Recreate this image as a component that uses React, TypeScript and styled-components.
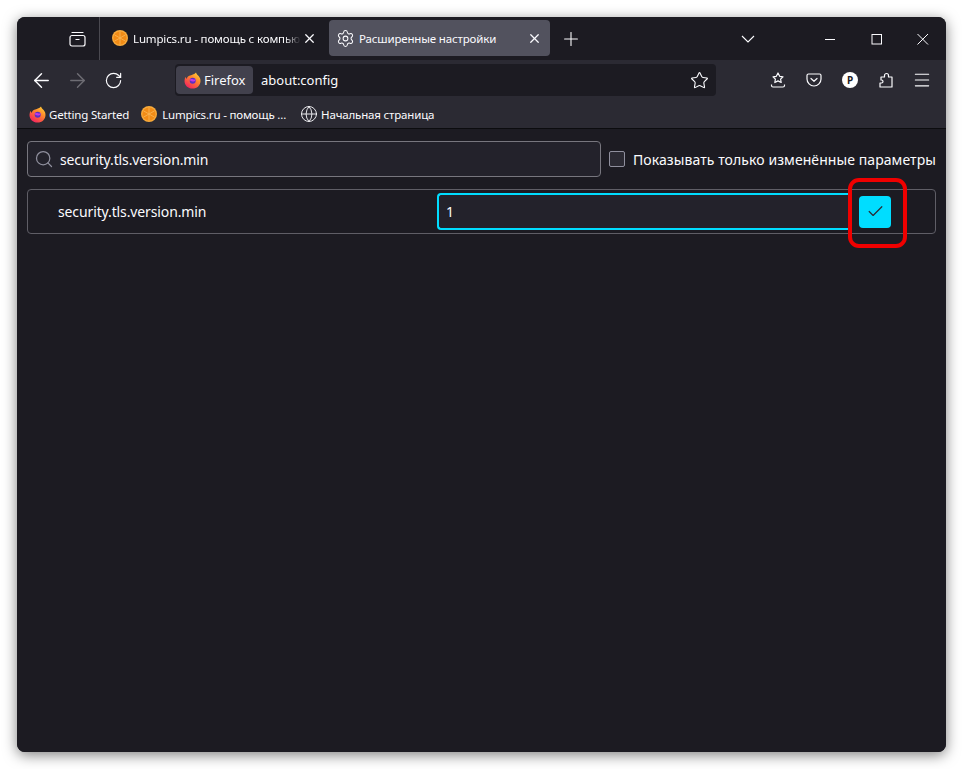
import styled, { createGlobalStyle } from 'styled-components';
import { ArrowLeft, ArrowRight, Check, Globe, Menu, Plus, RotateCw, Search, Settings, Star, X } from 'lucide-react';

const GlobalStyle = createGlobalStyle`
    html, body {
        margin: 0;
        padding: 0;
        background: #fff;
    }
    * {
        box-sizing: border-box;
    }
    svg {
        flex-shrink: 0;
    }
`

const Page = styled('div')`
    width: 963px;
    height: 769px;
    padding: 17px;
    font-family: "Noto Sans", "Open Sans", sans-serif;
    overflow: hidden;
`

const Window = styled('div')`
    position: relative;
    width: 929px;
    height: 735px;
    border-radius: 8px;
    background: #1c1b22;
    box-shadow: 0 3px 14px rgba(0, 0, 0, 0.5);
    overflow: hidden;
    display: flex;
    flex-direction: column;
    color: #fbfbfe;
`

const TitleBar = styled('div')`
    height: 43px;
    flex-shrink: 0;
    display: flex;
    align-items: flex-start;
    background: #1c1b22;
`

const TabListButton = styled('div')`
    width: 83px;
    height: 43px;
    padding-left: 52px;
    padding-top: 13px;
    border-right: 1px solid #4a4950;
    flex-shrink: 0;
`

const Tab = styled('div')<{ $active?: boolean; $gap?: number }>`
    width: 221px;
    height: 36px;
    margin-top: 3px;
    margin-left: ${props => props.$gap ?? 0}px;
    display: flex;
    align-items: center;
    padding-left: ${props => props.$active ? 8 : 12}px;
    border-radius: 4px;
    background: ${props => props.$active ? '#52525e' : 'transparent'};
    flex-shrink: 0;
`

const TabTitle = styled('span')<{ $fade?: boolean; $width: number }>`
    width: ${props => props.$width}px;
    margin-left: ${props => props.$fade ? 5 : 6}px;
    font-size: 11.5px;
    letter-spacing: -0.15px;
    white-space: nowrap;
    overflow: hidden;
    color: #fbfbfe;
    ${props => props.$fade ? `
        -webkit-mask-image: linear-gradient(to right, #000 90%, transparent);
        mask-image: linear-gradient(to right, #000 90%, transparent);
    ` : ''}
`

const TabClose = styled('div')`
    width: 16px;
    height: 16px;
    display: flex;
    align-items: center;
    justify-content: center;
    flex-shrink: 0;
`

const GearSlot = styled('div')`
    width: 16px;
    height: 16px;
    display: flex;
    align-items: center;
    justify-content: center;
    flex-shrink: 0;
`

const NewTab = styled('div')`
    width: 22px;
    height: 22px;
    margin-left: 10px;
    margin-top: 11px;
    flex-shrink: 0;
`

const TitleSpacer = styled('div')`
    flex: 1;
`

const CaptionButton = styled('div')<{ $gap: number }>`
    width: 16px;
    height: 16px;
    margin-top: 13px;
    margin-right: ${props => props.$gap}px;
    flex-shrink: 0;
`

const NavBar = styled('div')`
    height: 40px;
    flex-shrink: 0;
    display: flex;
    align-items: center;
    background: #2b2a33;
    padding-left: 16px;
`

const NavIcon = styled('div')<{ $gap?: number }>`
    width: 16px;
    height: 16px;
    margin-right: ${props => props.$gap ?? 20}px;
    flex-shrink: 0;
    display: flex;
    align-items: center;
    justify-content: center;
`

const UrlBar = styled('div')`
    width: 541px;
    height: 32px;
    margin-left: 54px;
    margin-right: 54px;
    padding: 2px 7px 2px 1px;
    border-radius: 4px;
    background: #1c1b22;
    display: flex;
    align-items: center;
    flex-shrink: 0;
`

const IdentityPill = styled('div')`
    width: 77px;
    height: 28px;
    border-radius: 4px;
    background: #42414d;
    display: flex;
    align-items: center;
    gap: 3px;
    padding-left: 8px;
    font-size: 13px;
    color: #fbfbfe;
    flex-shrink: 0;
`

const UrlText = styled('span')`
    flex: 1;
    margin-left: 8px;
    font-size: 13px;
    color: #fbfbfe;
`

const BookmarksBar = styled('div')`
    height: 29px;
    flex-shrink: 0;
    display: flex;
    align-items: center;
    background: #2b2a33;
    border-bottom: 1px solid #0c0c0f;
    padding-left: 12px;
`

const Bookmark = styled('div')<{ $gap: number; $textGap: number }>`
    display: flex;
    align-items: center;
    gap: ${props => props.$textGap}px;
    margin-right: ${props => props.$gap}px;
    font-size: 11.5px;
    letter-spacing: -0.17px;
    color: #fbfbfe;
    white-space: nowrap;
`

const GlobeSlot = styled('div')`
    width: 16px;
    height: 16px;
    display: flex;
    align-items: center;
    justify-content: center;
`

const Content = styled('div')`
    flex: 1;
    padding: 12px 10px 0 10px;
    background: #1c1b22;
`

const Toolbar = styled('div')`
    display: flex;
    align-items: center;
`

const SearchBox = styled('div')`
    width: 574px;
    height: 36px;
    display: flex;
    align-items: center;
    gap: 6px;
    padding-left: 6px;
    border: 1px solid #77767e;
    border-radius: 4px;
    background: #23222b;
    font-size: 14px;
    letter-spacing: -0.12px;
    color: #fbfbfe;
`

const CheckBox = styled('div')`
    width: 16px;
    height: 16px;
    margin-left: 8px;
    border: 1px solid #8f8f9d;
    border-radius: 2px;
    background: #2b2a33;
    flex-shrink: 0;
`

const CheckLabel = styled('span')`
    margin-left: 8px;
    font-size: 14px;
    letter-spacing: 0.08px;
    color: #fbfbfe;
    white-space: nowrap;
`

const PrefRow = styled('div')`
    width: 909px;
    height: 45px;
    margin-top: 12px;
    display: flex;
    align-items: center;
    padding-left: 30px;
    border: 1px solid #5f5e66;
    border-radius: 4px;
    font-size: 14px;
`

const PrefName = styled('span')`
    width: 379px;
    flex-shrink: 0;
    letter-spacing: -0.12px;
    color: #fbfbfe;
`

const PrefInput = styled('div')`
    width: 412px;
    height: 37px;
    display: flex;
    align-items: center;
    padding-left: 7px;
    border: 2px solid #00ddff;
    border-right: none;
    border-radius: 4px 0 0 4px;
    background: #23222b;
    color: #fbfbfe;
    flex-shrink: 0;
`

const SaveButton = styled('div')`
    width: 32px;
    height: 32px;
    margin-left: 10px;
    border-radius: 4px;
    background: #00ddff;
    display: flex;
    align-items: center;
    justify-content: center;
    flex-shrink: 0;
`

const Highlight = styled('div')`
    position: absolute;
    left: 831px;
    top: 161px;
    width: 59px;
    height: 70px;
    border: 4px solid #f00000;
    border-radius: 11px;
    pointer-events: none;
`

const ProfileBadge = styled('div')`
    width: 16px;
    height: 16px;
    border-radius: 50%;
    background: #fff;
    color: #1c1b22;
    font-size: 10px;
    font-weight: 700;
    line-height: 16px;
    text-align: center;
`

const Orange = () => (
    <svg width="16" height="16" viewBox="0 0 16 16">
        <circle cx="8" cy="8" r="8" fill="#f8ab3c" />
        <circle cx="8" cy="8" r="6.600" fill="#f28c16" />
        <path d="M8 1.500v13M2.400 4.800l11.200 6.400M13.600 4.800L2.400 11.200" stroke="#f9b95a" strokeWidth="0.800" />
    </svg>
)

const FirefoxLogo = ({ id }: { id: string }) => (
    <svg width="17" height="17" viewBox="0 0 17 17">
        <defs>
            <linearGradient id={`${id}a`} x1="0.85" y1="0" x2="0.2" y2="0.95">
                <stop offset="0" stopColor="#ffd53a" />
                <stop offset="0.4" stopColor="#ff8a2b" />
                <stop offset="1" stopColor="#f3215f" />
            </linearGradient>
        </defs>
        <path d="M12 0.400c.4 1.600 1.600 2.400 2.600 3.600 1.300 1.500 1.900 3.100 1.900 4.900 0 4.400-3.500 7.700-8 7.700S.5 13.300.5 9c0-1.500.4-3 1.200-4.200.1 1 .5 1.700 1 2.200.2-1.500 1.200-2.500 2.600-3.200C7.500 2.800 10.500 2.500 12 .4z" fill={`url(#${id}a)`} />
        <circle cx="8.700" cy="8.800" r="3" fill="#5b2fc4" />
        <path d="M5.300 7.600c1.100-.6 2.300-.7 3.700-.3 1.300.4 2.200.2 2.900-.4-.2 1.600-1.500 2.600-3.200 2.600-1.400 0-2.600-.7-3.400-1.900z" fill="#c139e6" />
    </svg>
)

const App = () => {
    return (
        <Page>
            <GlobalStyle />
            <Window>
                <TitleBar>
                    <TabListButton>
                        <svg width="17" height="17" viewBox="0 0 17 17" fill="none" stroke="#fbfbfe" strokeWidth="1.200">
                            <path d="M3 2.500h11" strokeLinecap="round" />
                            <rect x="1" y="5.500" width="15" height="10.500" rx="2" />
                            <path d="M6.500 9.500h4" />
                        </svg>
                    </TabListButton>
                    <Tab>
                        <Orange />
                        <TabTitle $fade $width={168}>Lumpics.ru - помощь с компьютером</TabTitle>
                        <TabClose>
                            <X size={15} color="#fbfbfe" strokeWidth={2} />
                        </TabClose>
                    </Tab>
                    <Tab $active $gap={8}>
                        <GearSlot>
                            <Settings size={19} color="#fbfbfe" strokeWidth={1.300} />
                        </GearSlot>
                        <TabTitle $width={167}>Расширенные настройки</TabTitle>
                        <TabClose>
                            <X size={15} color="#fbfbfe" strokeWidth={2} />
                        </TabClose>
                    </Tab>
                    <NewTab>
                        <Plus size={22} color="#fbfbfe" strokeWidth={1.200} />
                    </NewTab>
                    <TitleSpacer />
                    <CaptionButton $gap={66}>
                        <svg width="16" height="16" viewBox="0 0 16 16" fill="none" stroke="#fbfbfe" strokeWidth="1.100">
                            <path d="M2 5l6 6 6-6" />
                        </svg>
                    </CaptionButton>
                    <CaptionButton $gap={31}>
                        <svg width="16" height="16" viewBox="0 0 16 16" fill="none" stroke="#fbfbfe">
                            <path d="M3 8.500h10" />
                        </svg>
                    </CaptionButton>
                    <CaptionButton $gap={30}>
                        <svg width="16" height="16" viewBox="0 0 16 16" fill="none" stroke="#fbfbfe">
                            <rect x="3" y="3.500" width="9.500" height="9.500" />
                        </svg>
                    </CaptionButton>
                    <CaptionButton $gap={15}>
                        <svg width="16" height="16" viewBox="0 0 16 16" fill="none" stroke="#fbfbfe">
                            <path d="M2.500 3l10.500 10.500M13 3L2.500 13.500" />
                        </svg>
                    </CaptionButton>
                </TitleBar>
                <NavBar>
                    <NavIcon>
                        <ArrowLeft size={23} color="#fbfbfe" strokeWidth={1.500} />
                    </NavIcon>
                    <NavIcon>
                        <ArrowRight size={23} color="#6e6d74" strokeWidth={1.500} />
                    </NavIcon>
                    <NavIcon $gap={0}>
                        <RotateCw size={19} color="#fbfbfe" strokeWidth={1.500} />
                    </NavIcon>
                    <UrlBar>
                        <IdentityPill>
                            <FirefoxLogo id="url" />
                            Firefox
                        </IdentityPill>
                        <UrlText>about:config</UrlText>
                        <Star size={19} color="#fbfbfe" strokeWidth={1.400} />
                    </UrlBar>
                    <NavIcon>
                        <svg width="16" height="16" viewBox="0 0 16 16" fill="none" stroke="#fbfbfe" strokeWidth="1.200" strokeLinejoin="round">
                            <path d="M8 1l1.700 3.300 3.300.5-2.400 2.300.6 3.400L8 8.900 4.800 10.500l.6-3.400L3 4.800l3.300-.5z" />
                            <path d="M1.500 12.500v1a1.500 1.500 0 0 0 1.500 1.500h10a1.500 1.500 0 0 0 1.500-1.500v-1" />
                        </svg>
                    </NavIcon>
                    <NavIcon>
                        <svg width="16" height="16" viewBox="0 0 16 16" fill="none" stroke="#fbfbfe" strokeWidth="1.200" strokeLinejoin="round" strokeLinecap="round">
                            <path d="M2.500 2h11A1.500 1.500 0 0 1 15 3.500V7a7 7 0 0 1-14 0V3.500A1.500 1.500 0 0 1 2.500 2z" />
                            <path d="M5 6.500l3 2.800 3-2.800" />
                        </svg>
                    </NavIcon>
                    <NavIcon>
                        <ProfileBadge>P</ProfileBadge>
                    </NavIcon>
                    <NavIcon>
                        <svg width="16" height="16" viewBox="0 0 16 16" fill="none" stroke="#fbfbfe" strokeWidth="1.200" strokeLinejoin="round">
                            <path d="M2 15v-4h1.500a1.500 1.500 0 0 0 0-3H3V5h3.500V3.500a2 2 0 0 1 4 0V5H14v10z" />
                        </svg>
                    </NavIcon>
                    <NavIcon $gap={0}>
                        <Menu size={20} color="#fbfbfe" strokeWidth={1.300} />
                    </NavIcon>
                </NavBar>
                <BookmarksBar>
                    <Bookmark $gap={12} $textGap={3}>
                        <FirefoxLogo id="bm" />
                        Getting Started
                    </Bookmark>
                    <Bookmark $gap={15} $textGap={5}>
                        <Orange />
                        Lumpics.ru - помощь ...
                    </Bookmark>
                    <Bookmark $gap={0} $textGap={4}>
                        <GlobeSlot>
                            <Globe size={18} color="#fbfbfe" strokeWidth={1.200} />
                        </GlobeSlot>
                        Начальная страница
                    </Bookmark>
                </BookmarksBar>
                <Content>
                    <Toolbar>
                        <SearchBox>
                            <Search size={20} color="#8f8f9d" strokeWidth={1.500} />
                            security.tls.version.min
                        </SearchBox>
                        <CheckBox />
                        <CheckLabel>Показывать только изменённые параметры</CheckLabel>
                    </Toolbar>
                    <PrefRow>
                        <PrefName>security.tls.version.min</PrefName>
                        <PrefInput>1</PrefInput>
                        <SaveButton>
                            <Check size={19} color="#2b2a33" strokeWidth={1.500} />
                        </SaveButton>
                    </PrefRow>
                </Content>
                <Highlight />
            </Window>
        </Page>
    );
};

export default App;
